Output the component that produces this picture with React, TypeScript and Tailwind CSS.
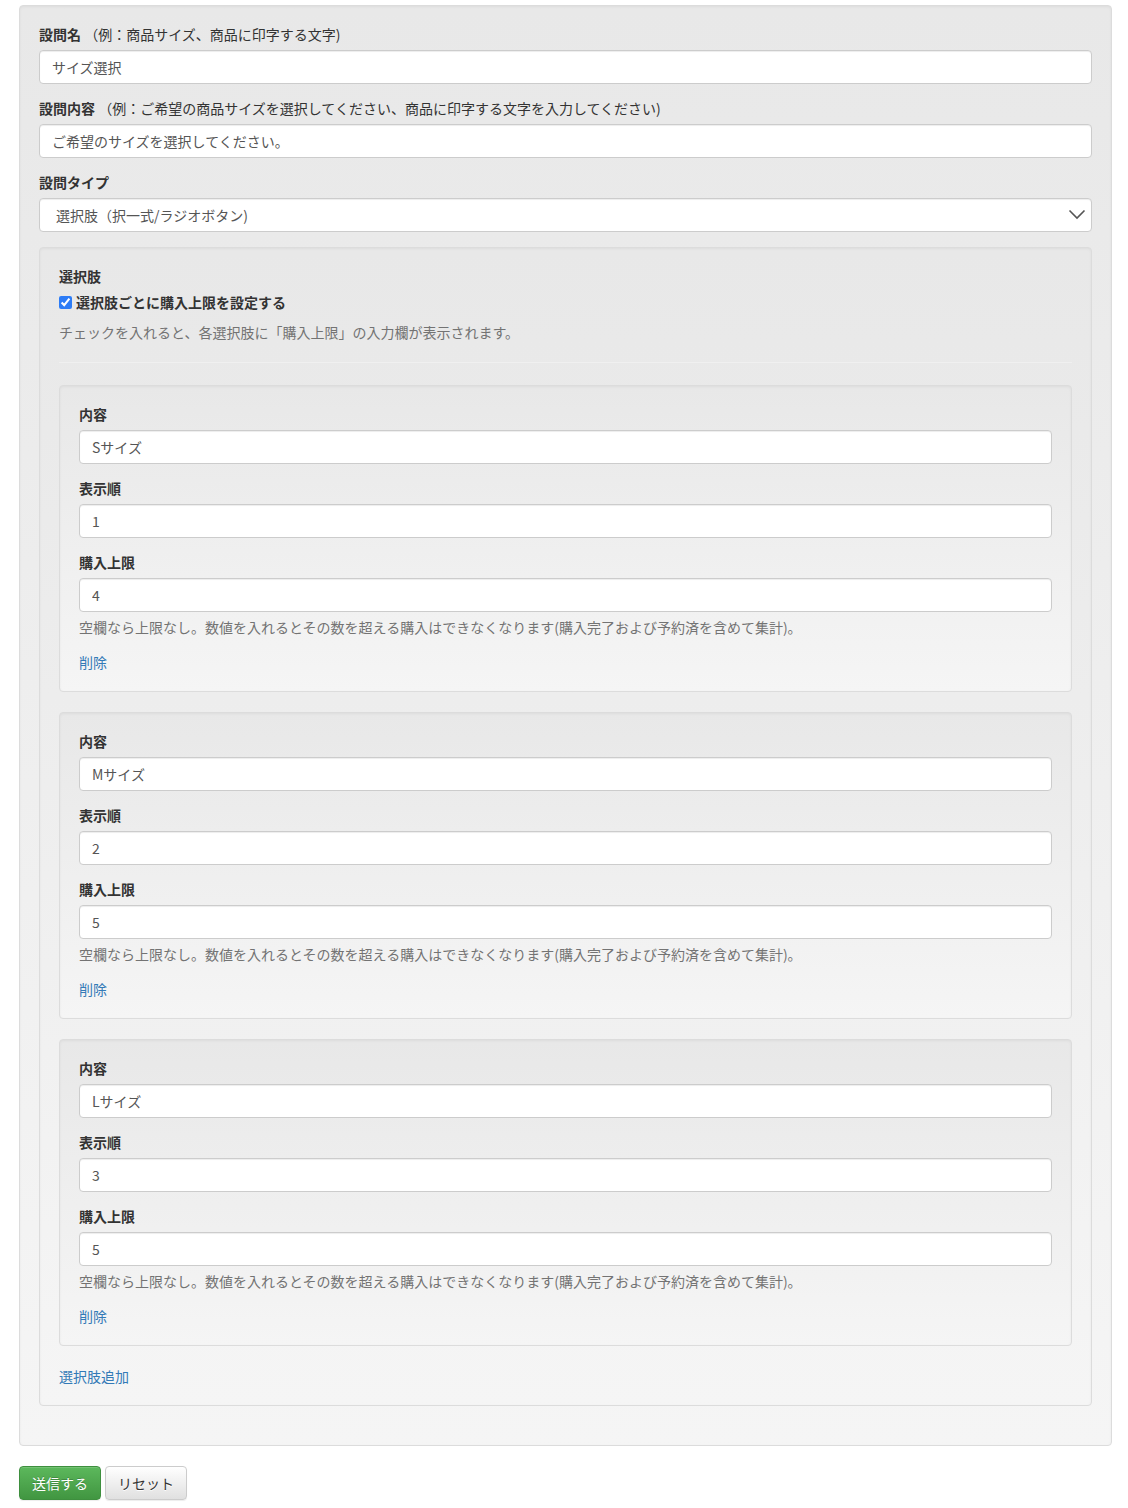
import React from "react";

const font = { fontFamily: '"Helvetica Neue", "Noto Sans CJK JP", "Noto Sans", sans-serif' };

const wellCls =
  "rounded-[4px] border border-[#dcdcdc] bg-gradient-to-b from-[#e8e8e8] to-[#f5f5f5] p-[19px] shadow-[inset_0_1px_3px_rgba(0,0,0,0.05)]";

const inputCls =
  "block h-[34px] w-full rounded-[4px] border border-[#ccc] bg-white px-[12px] py-[6px] text-[14px] leading-[20px] text-[#555] shadow-[inset_0_1px_1px_rgba(0,0,0,0.075)] outline-none";

function Label({ children, note }: { children: React.ReactNode; note?: string }) {
  return (
    <label className="mb-[5px] block text-[14px] font-bold leading-[18px] pb-[2px] text-[#333]">
      {children}
      {note && <span className="font-normal"> {note}</span>}
    </label>
  );
}

function Field({ label, note, value }: { label: string; note?: string; value: string }) {
  return (
    <div className="mb-[15px]">
      <Label note={note}>{label}</Label>
      <input className={inputCls} defaultValue={value} readOnly />
    </div>
  );
}

function Choice({ content, order, limit }: { content: string; order: string; limit: string }) {
  return (
    <div className={wellCls + " mb-[20px]"}>
      <Field label="内容" value={content} />
      <Field label="表示順" value={order} />
      <div className="mb-[15px]">
        <Label>購入上限</Label>
        <input className={inputCls} defaultValue={limit} readOnly />
        <p className="mb-[10px] mt-[5px] text-[14px] leading-[20px] text-[#737373]">
          空欄なら上限なし。数値を入れるとその数を超える購入はできなくなります(購入完了および予約済を含めて集計)。
        </p>
      </div>
      <a className="block text-[14px] leading-[20px] text-[#337ab7]">削除</a>
    </div>
  );
}

export default function App() {
  return (
    <div className="min-h-[1508px] bg-white pt-[5px]" style={font}>
      <div className={wellCls + " ml-[19px] w-[1093px]"}>
        <Field label="設問名" note="（例：商品サイズ、商品に印字する文字)" value="サイズ選択" />
        <Field
          label="設問内容"
          note="（例：ご希望の商品サイズを選択してください、商品に印字する文字を入力してください)"
          value="ご希望のサイズを選択してください。"
        />
        <div className="mb-[15px]">
          <Label>設問タイプ</Label>
          <div className="relative">
            <div className={inputCls + " pl-[16px]"}>選択肢（択一式/ラジオボタン)</div>
            <svg
              className="absolute right-[6px] top-[9px]"
              width="18"
              height="14"
              viewBox="0 0 18 14"
              fill="none"
            >
              <path d="M1.5 3.5 L9 11 L16.5 3.5" stroke="#555" strokeWidth="1.6" />
            </svg>
          </div>
        </div>

        <div className={wellCls + " mb-[20px]"}>
          <Label>選択肢</Label>
          <label className="mt-[1px] flex items-center text-[14px] font-bold leading-[20px] text-[#333]">
            <input
              type="checkbox"
              defaultChecked
              className="m-0 mr-[4px] h-[13px] w-[13px] accent-[#2d7cf6]"
            />
            選択肢ごとに購入上限を設定する
          </label>
          <p className="mb-0 mt-[10px] text-[14px] leading-[20px] text-[#737373]">
            チェックを入れると、各選択肢に「購入上限」の入力欄が表示されます。
          </p>
          <hr className="mb-[22px] mt-[20px] border-0 border-t border-[#f0f0f0]" />
          <Choice content="Sサイズ" order="1" limit="4" />
          <Choice content="Mサイズ" order="2" limit="5" />
          <Choice content="Lサイズ" order="3" limit="5" />
          <a className="block text-[14px] leading-[20px] text-[#337ab7]">選択肢追加</a>
        </div>
      </div>

      <div className="ml-[19px] mt-[20px] flex gap-[4px]">
        <button className="h-[34px] rounded-[4px] border border-[#3e8f3e] bg-gradient-to-b from-[#5cb85c] to-[#419641] px-[12px] text-[14px] leading-[20px] text-white [text-shadow:0_-1px_0_rgba(0,0,0,0.2)] shadow-[inset_0_1px_0_rgba(255,255,255,0.15),0_1px_1px_rgba(0,0,0,0.075)]">
          送信する
        </button>
        <button className="h-[34px] rounded-[4px] border border-[#ccc] bg-gradient-to-b from-white to-[#e0e0e0] px-[12px] text-[14px] leading-[20px] text-[#333] [text-shadow:0_1px_0_#fff] shadow-[inset_0_1px_0_rgba(255,255,255,0.15),0_1px_1px_rgba(0,0,0,0.075)]">
          リセット
        </button>
      </div>
    </div>
  );
}
